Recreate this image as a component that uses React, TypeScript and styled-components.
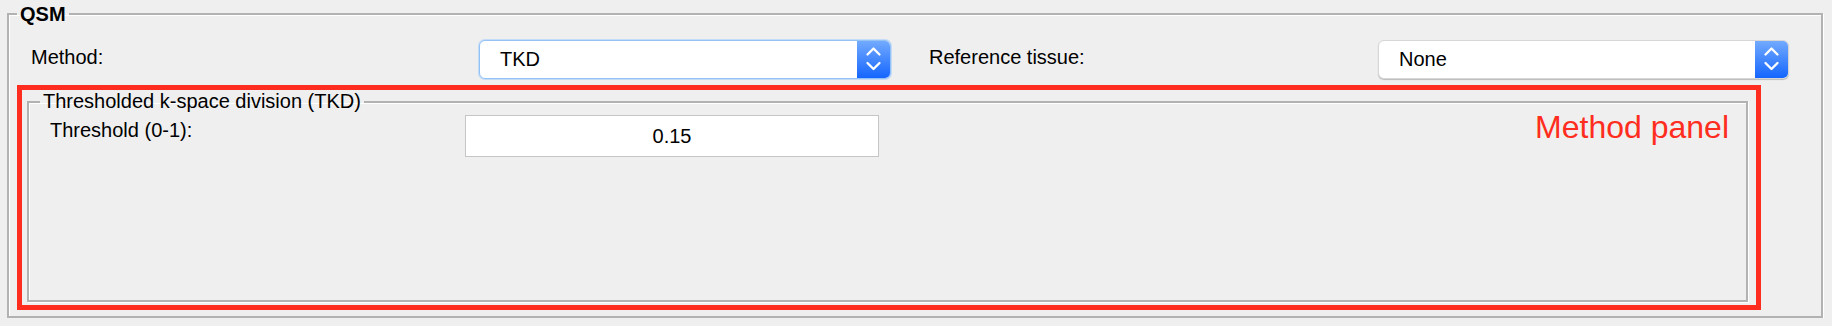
import styled, { createGlobalStyle } from "styled-components"

const GlobalStyle = createGlobalStyle`
  html, body {
    margin: 0;
    padding: 0;
    background: #efefef;
  }
  body {
    font-family: "Liberation Sans", Arial, Helvetica, sans-serif;
    color: #000;
  }
`

const etched = `
  border: 2px solid #b2b2b2;
  box-shadow: inset 1px 1px 0 #fff, 1px 1px 0 #fff;
`

const Group = styled.fieldset`
  box-sizing: border-box;
  margin: 2px 9px 0 7px;
  height: 316px;
  min-width: 0;
  padding: 0 8px;
  ${etched}
`

const Legend = styled.legend<{ $bold?: boolean }>`
  padding: 0 3px;
  font-size: 20px;
  line-height: ${p => (p.$bold ? "24px" : "23px")};
  font-weight: ${p => (p.$bold ? "bold" : "normal")};
`

const TopRow = styled.div`
  display: flex;
  margin-top: 14px;
  padding-left: 14px;
`

const Field = styled.div<{ $label: number; $control: number; $offset?: number }>`
  display: grid;
  grid-template-columns: ${p => p.$label}px ${p => p.$control}px;
  margin-left: ${p => p.$offset ?? 0}px;
`

const FieldLabel = styled.div`
  font-size: 20px;
  line-height: 23px;
  margin-top: 6px;
`

const SelectBox = styled.div<{ $focused?: boolean }>`
  box-sizing: border-box;
  height: 39px;
  display: flex;
  background: #fff;
  border-radius: 6px;
  overflow: hidden;
  border: 1px solid ${p => (p.$focused ? "#95c2f5" : "#d6d6d6")};
  box-shadow: ${p => (p.$focused ? "0 0 0 1px #c3dbf8" : "0 1px 1px rgba(0, 0, 0, 0.22)")};
`

const SelectValue = styled.div`
  flex: 1;
  display: flex;
  align-items: center;
  padding-left: 20px;
  font-size: 20px;
`

const Stepper = styled.div`
  width: 33px;
  display: flex;
  align-items: center;
  justify-content: center;
  background: linear-gradient(#72aaff, #1566ff);
`

const RedFrame = styled.div`
  box-sizing: border-box;
  display: flex;
  margin-top: 6px;
  width: 1744px;
  height: 225px;
  border: 5px solid #ff2d20;
`

const Panel = styled.fieldset`
  flex: 1;
  min-width: 0;
  margin: 0 8px 3px 5px;
  padding: 0 17px 0 11px;
  ${etched}
`

const ParamRow = styled.div`
  display: flex;
  align-items: flex-start;
  padding-top: 2px;
`

const ParamLabel = styled.div`
  width: 415px;
  margin: 4px 0 0 10px;
  font-size: 20px;
  line-height: 23px;
`

const NumberField = styled.input`
  box-sizing: border-box;
  width: 414px;
  height: 42px;
  padding: 0;
  border: 1px solid #c6c6c6;
  background: #fff;
  font-family: inherit;
  font-size: 20px;
  color: #000;
  text-align: center;
  outline: none;
`

const Note = styled.div`
  margin: -4px 0 0 auto;
  color: #ff2d20;
  font-size: 32px;
  line-height: 32px;
`

function Select({ value, focused }: { value: string; focused?: boolean }) {
  return (
    <SelectBox $focused={focused}>
      <SelectValue>{value}</SelectValue>
      <Stepper>
        <svg width="33" height="37" viewBox="0 0 33 37">
          <polyline points="10.5,13.5 16.5,7.5 22.5,13.5" fill="none" stroke="#fff" strokeWidth="2.3" strokeLinecap="round" strokeLinejoin="round" />
          <polyline points="10.5,22 16.5,28 22.5,22" fill="none" stroke="#fff" strokeWidth="2.3" strokeLinecap="round" strokeLinejoin="round" />
        </svg>
      </Stepper>
    </SelectBox>
  )
}

function App() {
  return (
    <>
      <GlobalStyle />
      <Group>
        <Legend $bold>QSM</Legend>
        <TopRow>
          <Field $label={448} $control={412}>
            <FieldLabel>Method:</FieldLabel>
            <Select value="TKD" focused />
          </Field>
          <Field $label={449} $control={411} $offset={38}>
            <FieldLabel>Reference tissue:</FieldLabel>
            <Select value="None" />
          </Field>
        </TopRow>
        <RedFrame>
          <Panel>
            <Legend>Thresholded k-space division (TKD)</Legend>
            <ParamRow>
              <ParamLabel>Threshold (0-1):</ParamLabel>
              <NumberField value="0.15" readOnly />
              <Note>Method panel</Note>
            </ParamRow>
          </Panel>
        </RedFrame>
      </Group>
    </>
  )
}

export default App
